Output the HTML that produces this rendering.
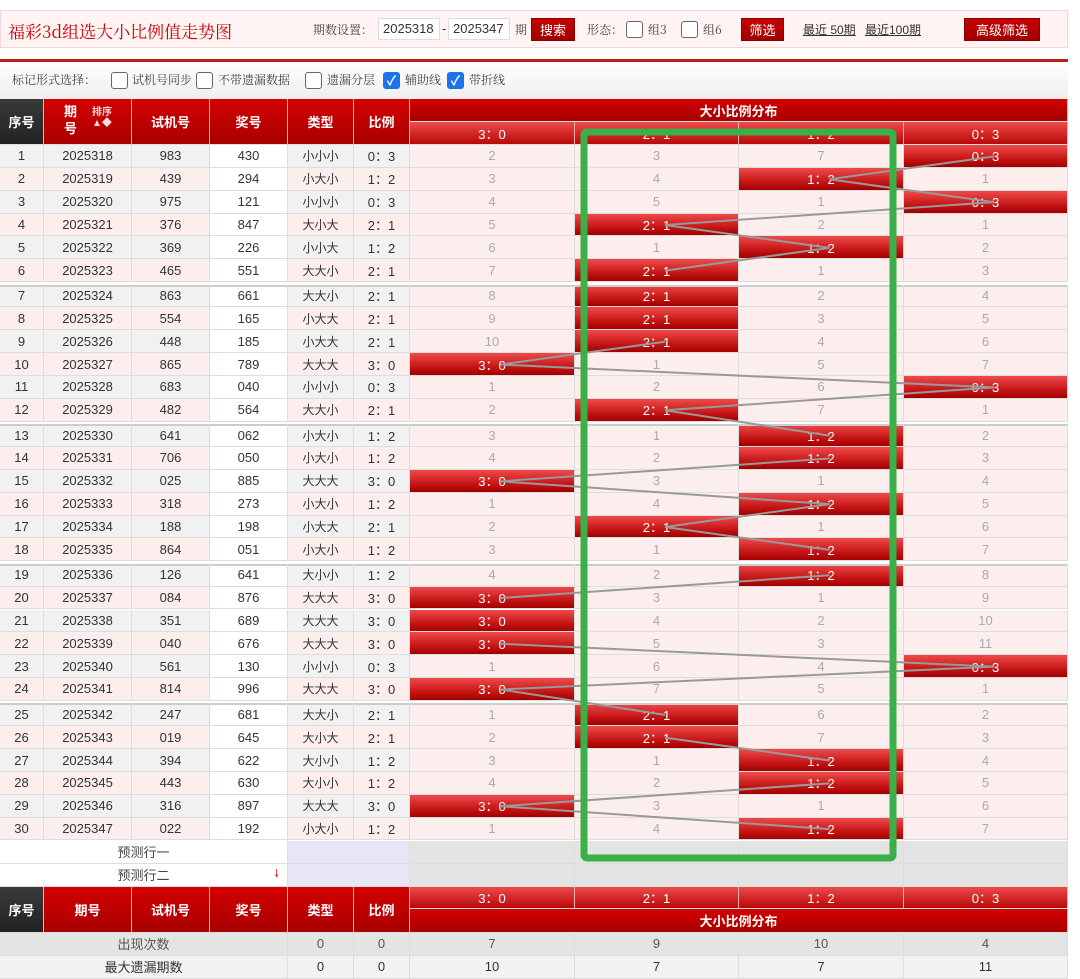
<!DOCTYPE html>
<html><head><meta charset="utf-8">
<style>
*{margin:0;padding:0;box-sizing:border-box}
body{width:1080px;height:972px;overflow:hidden;background:#fff;font-family:"Liberation Sans","Noto Sans CJK SC",sans-serif;position:relative;color:#333}
.a{position:absolute}
.c{position:absolute;display:flex;align-items:center;justify-content:center;font-size:13px;border-right:1px solid #ddd;border-bottom:1px solid #ddd;white-space:nowrap}
.hd{background:linear-gradient(#d40000,#a80000);color:#fff;font-weight:bold;border-right:1px solid #f3b0b0}
.sub{background:linear-gradient(#ee4a4a,#b80808);color:#fff;border-right:1px solid #f3b0b0}
.btn{position:absolute;background:linear-gradient(#c80000,#a00000);color:#fff;font-size:13px;display:flex;align-items:center;justify-content:center;border:1px solid #800}
.cb{position:absolute;width:17px;height:17px;border:1px solid #666;border-radius:3px;background:#fff}
.cbk{position:absolute;width:17px;height:17px;border-radius:3px;background:#1a73e8;color:#fff;font-size:13px;line-height:17px;text-align:center;font-weight:bold}
.t{position:absolute;font-size:13px;white-space:nowrap}
.s{font-size:12px;color:#444;font-family:"Noto Serif CJK SC","Liberation Serif",serif}
.inp{position:absolute;background:#fff;border:1px solid #ddd;font-size:13px;padding-left:4px;line-height:20px;height:22px}
.hit{background:linear-gradient(#ee4a4a,#c01010 70%,#a00000);color:#fff}
</style></head><body>
<div class="a" style="left:0;top:10px;width:1068px;height:38px;background:#fff3f3;border:1px solid #f0d8d8"></div>
<div class="t" style="left:8px;top:18px;font-size:17px;color:#c00;font-family:'Noto Serif CJK SC',serif">福彩3d组选大小比例值走势图</div>
<div class="t s" style="left:313px;top:21px">期数设置：</div>
<div class="inp" style="left:378px;top:18px;width:62px">2025318</div>
<div class="t" style="left:442px;top:21px">-</div>
<div class="inp" style="left:448px;top:18px;width:62px">2025347</div>
<div class="t s" style="left:515px;top:21px">期</div>
<div class="btn" style="left:531px;top:18px;width:44px;height:23px">搜索</div>
<div class="t s" style="left:587px;top:21px">形态：</div>
<div class="cb" style="left:626px;top:21px"></div><div class="t s" style="left:648px;top:21px">组3</div>
<div class="cb" style="left:681px;top:21px"></div><div class="t s" style="left:703px;top:21px">组6</div>
<div class="btn" style="left:741px;top:18px;width:43px;height:23px">筛选</div>
<div class="t" style="left:803px;top:21px;text-decoration:underline;font-size:12px">最近 50期</div>
<div class="t" style="left:865px;top:21px;text-decoration:underline;font-size:12px">最近100期</div>
<div class="btn" style="left:964px;top:18px;width:76px;height:23px">高级筛选</div>
<div class="a" style="left:0;top:59px;width:1068px;height:3px;background:#b82020"></div>
<div class="a" style="left:0;top:62px;width:1068px;height:37px;background:linear-gradient(#fff,#eee)"></div>
<div class="t s" style="left:12px;top:71px">标记形式选择：</div>
<div class="cb" style="left:111px;top:72px"></div><div class="t s" style="left:132px;top:71px">试机号同步</div>
<div class="cb" style="left:196px;top:72px"></div><div class="t s" style="left:218px;top:71px">不带遗漏数据</div>
<div class="cb" style="left:305px;top:72px"></div><div class="t s" style="left:327px;top:71px">遗漏分层</div>
<div class="cbk" style="left:383px;top:72px">✓</div><div class="t s" style="left:405px;top:71px">辅助线</div>
<div class="cbk" style="left:447px;top:72px">✓</div><div class="t s" style="left:469px;top:71px">带折线</div>
<div id="g"></div>
<svg class="a" style="left:0;top:0" width="1080" height="972" id="sv"></svg>
<script>
var X=[0,44,132,210,288,354,410,575,739,904,1068];
var D=`983 430 小小小 0
439 294 小大小 1
975 121 小小小 0
376 847 大小大 2
369 226 小小大 1
465 551 大大小 2
863 661 大大小 2
554 165 小大大 2
448 185 小大大 2
865 789 大大大 3
683 040 小小小 0
482 564 大大小 2
641 062 小大小 1
706 050 小大小 1
025 885 大大大 3
318 273 小大小 1
188 198 小大大 2
864 051 小大小 1
126 641 大小小 1
084 876 大大大 3
351 689 大大大 3
040 676 大大大 3
561 130 小小小 0
814 996 大大大 3
247 681 大大小 2
019 645 大小大 2
394 622 大小小 1
443 630 大小小 1
316 897 大大大 3
022 192 小大小 1`.split("\n").map(s=>s.split(" "));
var h="";
function cell(x1,x2,y,hh,txt,cls,st){h+='<div class="c '+(cls||"")+'" style="left:'+x1+'px;top:'+y+'px;width:'+(x2-x1)+'px;height:'+hh+'px;'+(st||"")+'">'+txt+'</div>';}
var hn=["序号","期<br>号","试机号","奖号","类型","比例"];
for(var i=0;i<6;i++)cell(X[i],X[i+1],99,46,i==1?'<span style="position:absolute;left:20px;top:4px;line-height:17px">期<br>号</span><span style="position:absolute;left:48px;top:8px;font-size:10px;color:#fdd;line-height:11px">排序<br>▲◆</span>':hn[i],"hd",i==0?"background:linear-gradient(#3a3a3a,#222)":"");
cell(410,1068,99,23,"大小比例分布","hd");
var lab=["3：0","2：1","1：2","0：3"];
for(var j=0;j<4;j++)cell(X[6+j],X[7+j],122,23,lab[j],"sub");
var miss=[2,3,7,0],pts=[];
var ratioIdx={"3":0,"2":1,"1":2,"0":3};
for(var r=0;r<30;r++){
 var y=145+r*22.85+Math.floor(r/6)*2.5,hh=22.85;
 var bg=r%2==0?"#f1f1f1":"#fdeeee";
 var sep=(r%6==0&&r>0)?"box-shadow:inset 0 2px 0 #ccc;":"";
 var d=D[r],k=ratioIdx[d[3]];
 var rt=d[3]+"："+(3-d[3]);
 var vals=[r+1,"2025"+(318+r),d[0],d[1],d[2],rt];
 for(var i=0;i<6;i++)cell(X[i],X[i+1],y,hh,vals[i],"","background:"+(i==3?"#fff":bg)+";"+sep+(i==4?"font-size:12px;":""));
 if(r>0){for(var j=0;j<4;j++)miss[j]++;}
 for(var j=0;j<4;j++){
  if(j==k){cell(X[6+j],X[7+j],y,hh,rt,"hit",sep);pts.push([(X[6+j]+X[7+j])/2+8,y+hh/2,j]);miss[j]=0;}
  else cell(X[6+j],X[7+j],y,hh,miss[j],"","background:#fdeeee;color:#aaa;"+sep);
 }
}
var y0=145+30*22.85+4*2.5;
cell(0,288,y0,23,"预测行一","","background:#fff;color:#444");
cell(288,410,y0,23,"","","background:#e6e6f6");
for(var j=0;j<4;j++)cell(X[6+j],X[7+j],y0,23,"","","background:#e4e4e4");
cell(0,288,y0+23,23,'预测行二<span style="position:absolute;right:8px;color:#d33;font-size:11px">🠗</span>',"","background:#fff;color:#444");
cell(288,410,y0+23,23,"","","background:#e6e6f6");
for(var j=0;j<4;j++)cell(X[6+j],X[7+j],y0+23,23,"","","background:#e4e4e4");
var yb=y0+46;
var bn=["序号","期号","试机号","奖号","类型","比例"];
for(var i=0;i<6;i++)cell(X[i],X[i+1],yb,46,bn[i],"hd",i==0?"background:linear-gradient(#3a3a3a,#222)":"");
for(var j=0;j<4;j++)cell(X[6+j],X[7+j],yb,22,lab[j],"sub");
cell(410,1068,yb+22,24,"大小比例分布","hd");
var ys=yb+46;
var s1=[7,9,10,4],s2=[10,7,7,11];
cell(0,288,ys,23,"出现次数","","background:#e4e4e4;color:#555");cell(288,354,ys,23,"0","","background:#e4e4e4;color:#555");cell(354,410,ys,23,"0","","background:#e4e4e4;color:#555");
for(var j=0;j<4;j++)cell(X[6+j],X[7+j],ys,23,s1[j],"","background:#e4e4e4;color:#555");
cell(0,288,ys+23,23,"最大遗漏期数","","background:#f2f2f2");cell(288,354,ys+23,23,"0","","background:#f2f2f2");cell(354,410,ys+23,23,"0","","background:#f2f2f2");
for(var j=0;j<4;j++)cell(X[6+j],X[7+j],ys+23,23,s2[j],"","background:#f2f2f2");
document.getElementById("g").innerHTML=h;
var sv="";
for(var i=1;i<pts.length;i++){var a=pts[i-1],b=pts[i];if(a[2]==b[2])continue;sv+='<line x1="'+a[0]+'" y1="'+a[1]+'" x2="'+b[0]+'" y2="'+b[1]+'" stroke="#999" stroke-width="2"/>';}
sv+='<rect x="584" y="132" width="309" height="726" rx="3" fill="none" stroke="#3bb048" stroke-width="7"/>';
document.getElementById("sv").innerHTML=sv;
</script>
</body></html>
